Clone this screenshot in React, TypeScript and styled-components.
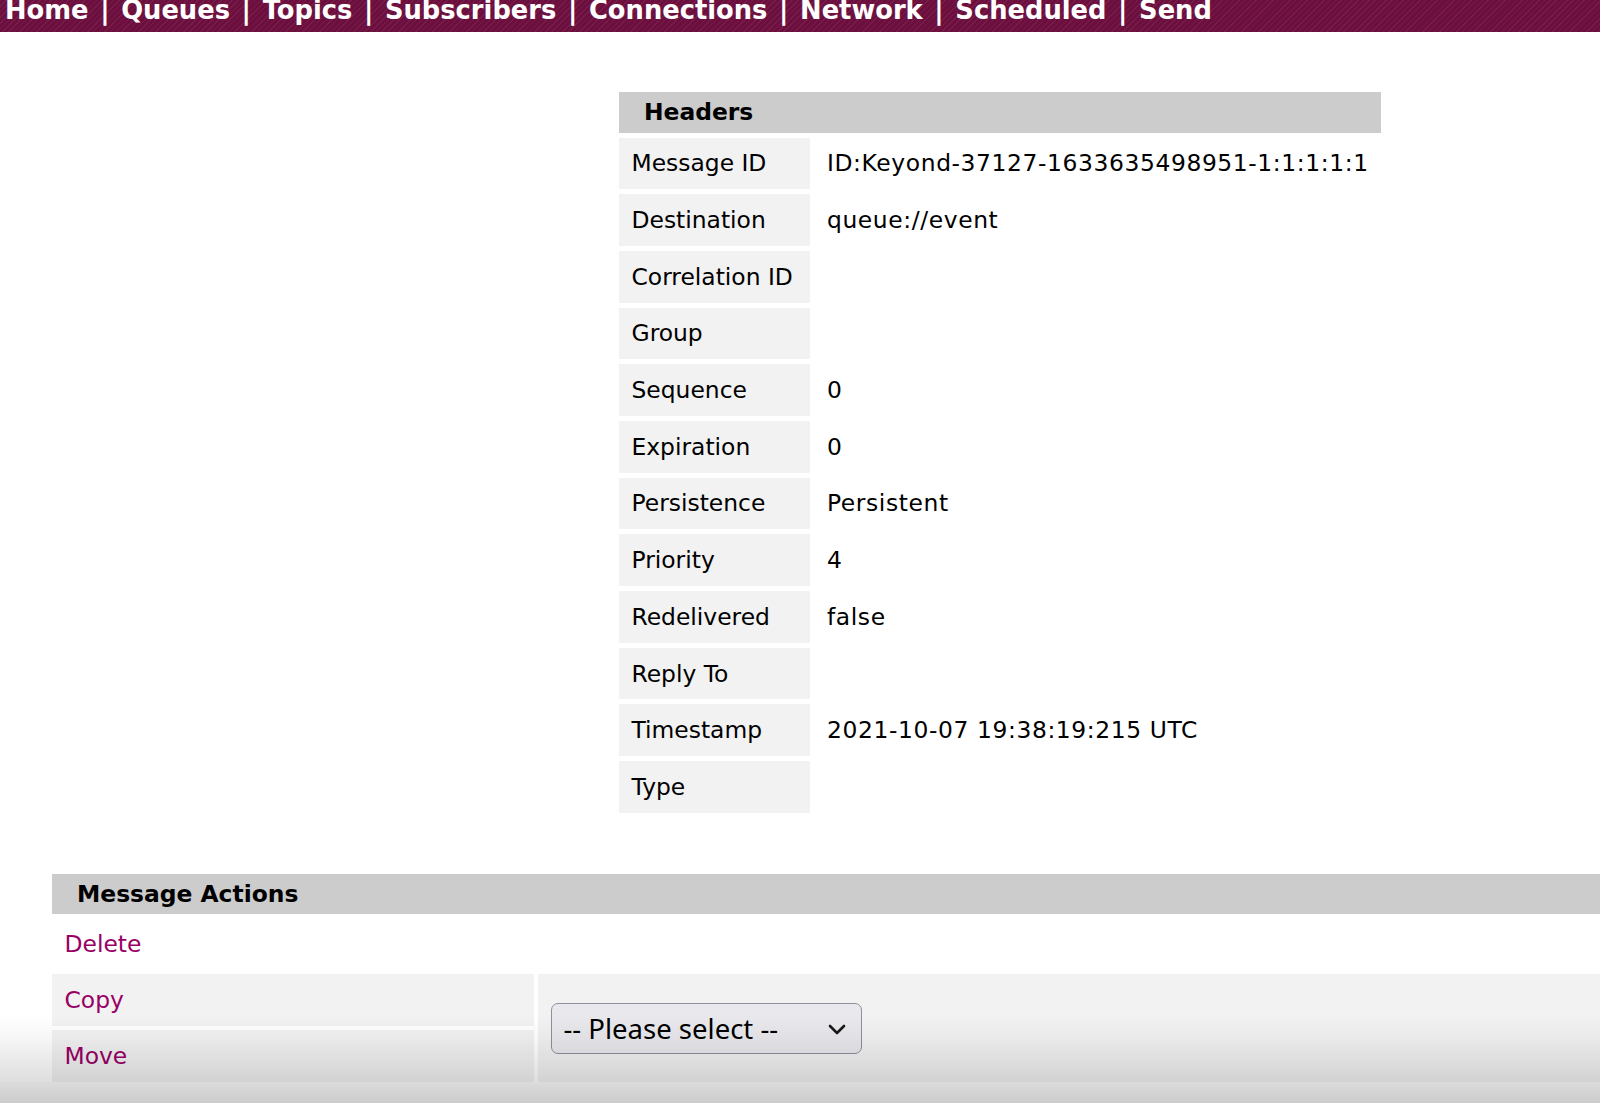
import React from "react";
import styled, { createGlobalStyle } from "styled-components";

const GlobalStyle = createGlobalStyle`
  html, body {
    margin: 0;
    padding: 0;
    overflow: hidden;
    background: #ffffff;
  }
  body {
    font-family: "DejaVu Sans", Verdana, sans-serif;
    font-size: 23.4px;
    color: #000000;
  }
`;

const Page = styled.div`
  width: 1600px;
  height: 1103px;
  overflow: hidden;
`;

const NavBar = styled.nav`
  height: 32px;
  overflow: hidden;
  display: flex;
  align-items: flex-end;
  padding-left: 5px;
  background-color: #6d0f3e;
  background-image: repeating-linear-gradient(
    135deg,
    rgba(255, 255, 255, 0.06) 0px,
    rgba(255, 255, 255, 0.06) 1px,
    transparent 1px,
    transparent 4px
  );
`;

const NavText = styled.div`
  font-family: "DejaVu Sans", Verdana, sans-serif;
  font-weight: bold;
  font-size: 25.75px;
  line-height: 26px;
  word-spacing: 2.65px;
  padding-bottom: 9px;
  color: #ffffff;
  white-space: nowrap;
`;

const NavLink = styled.a`
  color: #ffffff;
  text-decoration: none;
`;

const HeadersArea = styled.div`
  padding: 55px 0 0 614px;
`;

const ActionsArea = styled.div`
  padding: 52px 0 0 48px;
`;

const InfoTable = styled.table<{ $spacing: number; $full?: boolean }>`
  border-collapse: separate;
  border-spacing: ${(p) => p.$spacing}px;
  width: ${(p) => (p.$full ? "calc(100% + 5px)" : "auto")};
`;

const HeadCell = styled.th<{ $h: number }>`
  background: #cccccc;
  text-align: left;
  font-weight: bold;
  height: ${(p) => p.$h}px;
  padding: 0 25px;
  vertical-align: middle;
  white-space: nowrap;
`;

const LabelCell = styled.td`
  background: #f2f2f2;
  box-sizing: border-box;
  width: 191px;
  height: 51.7px;
  padding: 0 12.5px;
  vertical-align: middle;
  white-space: nowrap;
`;

const ValueCell = styled.td`
  height: 51.7px;
  padding: 0 12px;
  letter-spacing: 0.6px;
  vertical-align: middle;
  white-space: nowrap;
`;

const ActionCell = styled.td<{ $shaded?: boolean }>`
  background: ${(p) => (p.$shaded ? "#f2f2f2" : "transparent")};
  box-sizing: border-box;
  width: 482px;
  height: 52px;
  padding: 0 12.5px;
  vertical-align: middle;
  white-space: nowrap;
`;

const SelectCell = styled.td`
  background: #f2f2f2;
  padding: 0 12.5px;
  vertical-align: middle;
`;

const ActionLink = styled.a`
  color: #990066;
  text-decoration: none;
`;

const SelectWrap = styled.div`
  position: relative;
  display: inline-block;
  vertical-align: middle;
`;

const Select = styled.select`
  appearance: none;
  -webkit-appearance: none;
  box-sizing: border-box;
  width: 311px;
  height: 51px;
  margin: 0;
  padding: 0 0 0 12px;
  border: 1.5px solid #8f8f9d;
  border-radius: 7px;
  background: #e9e9ed;
  color: #000000;
  font-family: "Noto Sans", "Open Sans", sans-serif;
  font-size: 27.5px;
  outline: none;
`;

const Chevron = styled.svg`
  position: absolute;
  left: 277px;
  top: 20px;
  width: 18px;
  height: 13px;
  pointer-events: none;
`;

const BottomFade = styled.div`
  position: fixed;
  left: 0;
  right: 0;
  bottom: 0;
  height: 88px;
  pointer-events: none;
  background: linear-gradient(
    to bottom,
    rgba(0, 0, 0, 0) 0%,
    rgba(0, 0, 0, 0.03) 25%,
    rgba(0, 0, 0, 0.13) 76%,
    rgba(0, 0, 0, 0.14) 77%,
    rgba(0, 0, 0, 0.2) 100%
  );
`;

const navItems = [
  "Home",
  "Queues",
  "Topics",
  "Subscribers",
  "Connections",
  "Network",
  "Scheduled",
  "Send",
];

const headerRows: [string, string][] = [
  ["Message ID", "ID:Keyond-37127-1633635498951-1:1:1:1:1"],
  ["Destination", "queue://event"],
  ["Correlation ID", ""],
  ["Group", ""],
  ["Sequence", "0"],
  ["Expiration", "0"],
  ["Persistence", "Persistent"],
  ["Priority", "4"],
  ["Redelivered", "false"],
  ["Reply To", ""],
  ["Timestamp", "2021-10-07 19:38:19:215 UTC"],
  ["Type", ""],
];

export default function App() {
  return (
    <Page>
      <GlobalStyle />
      <NavBar>
        <NavText>
          {navItems.map((item, i) => (
            <React.Fragment key={item}>
              {i > 0 && " | "}
              <NavLink href="#">{item}</NavLink>
            </React.Fragment>
          ))}
        </NavText>
      </NavBar>

      <HeadersArea>
        <InfoTable $spacing={5}>
          <thead>
            <tr>
              <HeadCell $h={40.5} colSpan={2}>
                Headers
              </HeadCell>
            </tr>
          </thead>
          <tbody>
            {headerRows.map(([label, value]) => (
              <tr key={label}>
                <LabelCell>{label}</LabelCell>
                <ValueCell>{value}</ValueCell>
              </tr>
            ))}
          </tbody>
        </InfoTable>
      </HeadersArea>

      <ActionsArea>
        <InfoTable $spacing={4.5} $full>
          <thead>
            <tr>
              <HeadCell $h={40.5} colSpan={2}>
                Message Actions
              </HeadCell>
            </tr>
          </thead>
          <tbody>
            <tr>
              <ActionCell colSpan={2}>
                <ActionLink href="#">Delete</ActionLink>
              </ActionCell>
            </tr>
            <tr>
              <ActionCell $shaded>
                <ActionLink href="#">Copy</ActionLink>
              </ActionCell>
              <SelectCell rowSpan={2}>
                <SelectWrap>
                  <Select defaultValue="">
                    <option value="">-- Please select --</option>
                  </Select>
                  <Chevron viewBox="0 0 18 13">
                    <path
                      d="M2 3 L9 10 L16 3"
                      fill="none"
                      stroke="#1a1a1a"
                      strokeWidth="2.6"
                      strokeLinecap="round"
                      strokeLinejoin="round"
                    />
                  </Chevron>
                </SelectWrap>
              </SelectCell>
            </tr>
            <tr>
              <ActionCell $shaded>
                <ActionLink href="#">Move</ActionLink>
              </ActionCell>
            </tr>
          </tbody>
        </InfoTable>
      </ActionsArea>
      <BottomFade />
    </Page>
  );
}
